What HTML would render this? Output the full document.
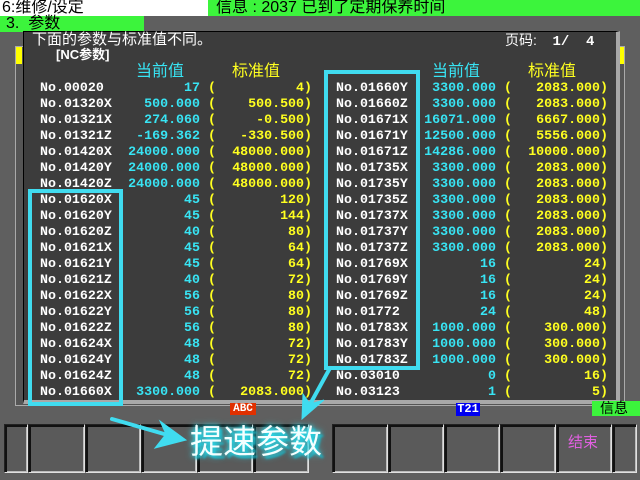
<!DOCTYPE html>
<html><head><meta charset="utf-8"><style>
*{margin:0;padding:0;box-sizing:border-box}
body{width:640px;height:480px;background:#5f5f5f;position:relative;overflow:hidden;font-family:"Liberation Mono","Noto Sans CJK SC",monospace;}
.a{position:absolute;white-space:pre}
.cjk{font-family:"Liberation Sans","Noto Sans CJK SC",sans-serif}
.col{position:absolute;font-weight:bold;font-size:13.3px;line-height:16px;white-space:pre}
.w{color:#fff}.c{color:#38e4f4}.y{color:#ffff20}
.r{text-align:right}
.btn{position:absolute;top:424px;height:49px;background:#5a5a5a;border:1px solid #e0e0e0;border-top-color:#222;border-left-color:#222;box-shadow:inset 2px 2px 0 #111,inset -1px -1px 0 #bbb}
</style></head><body>
<div class="a cjk" style="left:0;top:0;width:208px;height:16px;background:#fff;color:#000;font-size:16px;line-height:16px;padding-left:2px">6:维修/设定</div>
<div class="a cjk" style="left:208px;top:0;width:432px;height:16px;background:#3cf43c;color:#000;font-size:16px;line-height:16px;padding-left:8px">信息 : 2037 已到了定期保养时间</div>
<div class="a cjk" style="left:0;top:16px;width:144px;height:16px;background:#3cf43c;color:#000;font-size:16px;line-height:16px;padding-left:6px">3.  参数</div>
<div class="a" style="left:15px;top:46px;width:610px;height:360px;background:#555;border:1px solid #aaa"></div>
<div class="a" style="left:16px;top:47px;width:6px;height:17px;background:#ffff00"></div>
<div class="a" style="left:619px;top:47px;width:5px;height:17px;background:#ffff00"></div>
<div class="a" style="left:23px;top:31px;width:597px;height:373px;background:#3c3c3c;border-top:1px solid #000;border-left:1px solid #000;border-right:4px solid #a8a8a8;border-bottom:4px solid #a8a8a8"></div>
<div class="a cjk" style="left:32px;top:32px;color:#fff;font-size:15px;line-height:16px">下面的参数与标准值不同。</div>
<div class="a cjk" style="left:56px;top:48px;color:#fff;font-size:13px;line-height:14px;font-weight:bold">[NC参数]</div>
<div class="a cjk" style="left:505px;top:32px;color:#fff;font-size:14px;line-height:16px">页码:    <b style="font-family:'Liberation Mono'">1/  4</b></div>
<div class="a cjk c" style="left:136px;top:63px;font-size:16px;line-height:17px">当前值</div>
<div class="a cjk y" style="left:232px;top:63px;font-size:16px;line-height:17px">标准值</div>
<div class="a cjk c" style="left:432px;top:63px;font-size:16px;line-height:17px">当前值</div>
<div class="a cjk y" style="left:528px;top:63px;font-size:16px;line-height:17px">标准值</div>

<div class="col w" style="left:40px;top:80px">No.00020
No.01320X
No.01321X
No.01321Z
No.01420X
No.01420Y
No.01420Z
No.01620X
No.01620Y
No.01620Z
No.01621X
No.01621Y
No.01621Z
No.01622X
No.01622Y
No.01622Z
No.01624X
No.01624Y
No.01624Z
No.01660X</div>
<div class="col c r" style="left:100px;width:100px;top:80px">17
500.000
274.060
-169.362
24000.000
24000.000
24000.000
45
45
40
45
45
40
56
56
56
48
48
48
3300.000</div>
<div class="col y" style="left:208px;top:80px">(
(
(
(
(
(
(
(
(
(
(
(
(
(
(
(
(
(
(
(</div>
<div class="col y r" style="left:212px;width:100px;top:80px">4)
500.500)
-0.500)
-330.500)
48000.000)
48000.000)
48000.000)
120)
144)
80)
64)
64)
72)
80)
80)
80)
72)
72)
72)
2083.000)</div>

<div class="col w" style="left:336px;top:80px">No.01660Y
No.01660Z
No.01671X
No.01671Y
No.01671Z
No.01735X
No.01735Y
No.01735Z
No.01737X
No.01737Y
No.01737Z
No.01769X
No.01769Y
No.01769Z
No.01772
No.01783X
No.01783Y
No.01783Z
No.03010
No.03123</div>
<div class="col c r" style="left:396px;width:100px;top:80px">3300.000
3300.000
16071.000
12500.000
14286.000
3300.000
3300.000
3300.000
3300.000
3300.000
3300.000
16
16
16
24
1000.000
1000.000
1000.000
0
1</div>
<div class="col y" style="left:504px;top:80px">(
(
(
(
(
(
(
(
(
(
(
(
(
(
(
(
(
(
(
(</div>
<div class="col y r" style="left:508px;width:100px;top:80px">2083.000)
2083.000)
6667.000)
5556.000)
10000.000)
2083.000)
2083.000)
2083.000)
2083.000)
2083.000)
2083.000)
24)
24)
24)
48)
300.000)
300.000)
300.000)
16)
5)</div>

<div class="a" style="left:28px;top:189px;width:95px;height:217px;border:4px solid #40dcf0"></div>
<div class="a" style="left:324px;top:70px;width:96px;height:300px;border:4px solid #40dcf0"></div>

<div class="a" style="left:230px;top:403px;width:26px;height:12px;background:#e03000;color:#fff;font:bold 11px/12px 'Liberation Mono';text-align:center">ABC</div>
<div class="a" style="left:456px;top:403px;width:24px;height:13px;background:#0000f0;color:#fff;font:bold 12px/13px 'Liberation Mono';text-align:center">T21</div>
<div class="a cjk" style="left:592px;top:401px;width:48px;height:15px;background:#3cf43c;color:#000;font-size:14px;line-height:15px;padding-left:8px">信息</div>

<div class="btn" style="left:4px;width:24px"></div>
<div class="btn" style="left:28px;width:57px"></div>
<div class="btn" style="left:85px;width:56px"></div>
<div class="btn" style="left:141px;width:56px"></div>
<div class="btn" style="left:197px;width:56px"></div>
<div class="btn" style="left:253px;width:56px"></div>
<div class="btn" style="left:332px;width:56px"></div>
<div class="btn" style="left:388px;width:56px"></div>
<div class="btn" style="left:444px;width:56px"></div>
<div class="btn" style="left:500px;width:56px"></div>
<div class="btn" style="left:556px;width:56px"></div>
<div class="btn" style="left:612px;width:25px"></div>
<div class="a cjk" style="left:568px;top:431px;color:#e060e0;font-size:15px">结束</div>

<svg class="a" style="left:0;top:0" width="640" height="480">
<g stroke="#40dcf0" fill="#40dcf0" stroke-width="4" stroke-linecap="round">
<line x1="112" y1="419" x2="178" y2="438"/>
<polygon points="186,440 160,421 166,434 155,448" stroke-width="1"/>
<line x1="330" y1="368" x2="308" y2="408"/>
<polygon points="302,419 303,394 310,404 324,400" stroke-width="1"/>
</g>
</svg>
<div class="a cjk" style="left:190px;top:422px;color:#f4ffff;font-size:33px;line-height:40px;text-shadow:0 0 4px #30e0f0,0 0 8px #30e0f0,3px 3px 2px #1aa8b8">提速参数</div>
</body></html>
